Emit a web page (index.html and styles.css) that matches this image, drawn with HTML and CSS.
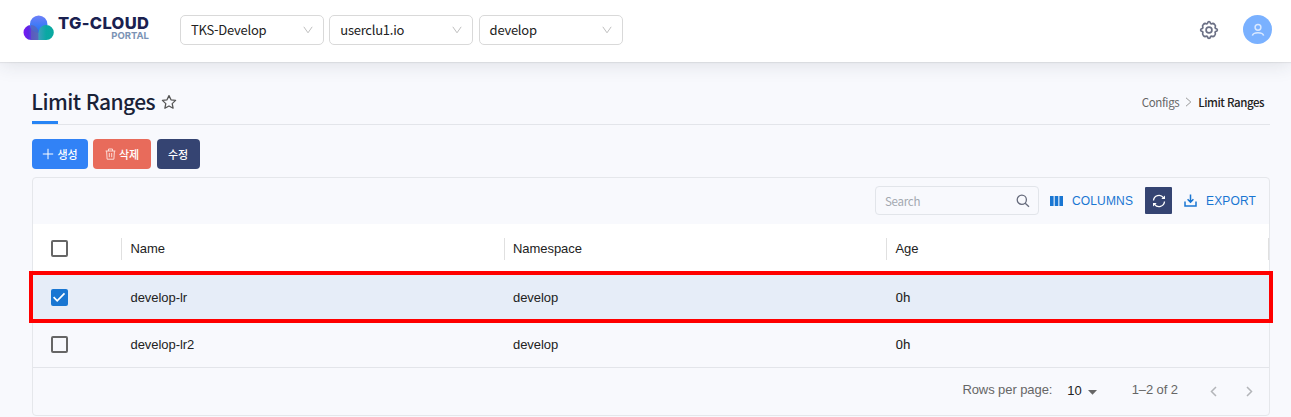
FILE: index.html
```html
<!DOCTYPE html>
<html lang="ko">
<head>
<meta charset="utf-8">
<title>Limit Ranges</title>
<link rel="stylesheet" href="styles.css">
</head>
<body>
<header class="topbar">
  <div class="logo">
    <svg class="logo-mark" width="31" height="26" viewBox="0 0 31 26">
      <defs>
        <linearGradient id="gp" x1="0" x2="1"><stop offset="0" stop-color="#7a18f5"/><stop offset=".3" stop-color="#5f24e6"/><stop offset="1" stop-color="#4d86c8"/></linearGradient>
        <linearGradient id="gb" x1="0" x2="0" y1="0" y2="1"><stop offset="0" stop-color="#6f80f8"/><stop offset="1" stop-color="#1a75f5"/></linearGradient>
        <linearGradient id="gt" x1="0" x2="1"><stop offset="0" stop-color="#3d9fbd"/><stop offset=".5" stop-color="#0aa8a4"/><stop offset="1" stop-color="#0ba9a0"/></linearGradient>
      </defs>
      <path d="M8 10h8v15H8A7.5 7.5 0 0 1 8 10z" fill="url(#gp)"/>
      <circle cx="15.7" cy="9.2" r="8.7" fill="url(#gb)"/>
      <path d="M8 10a7.5 7.5 0 0 1 7.5 7.5V25H8z" fill="#5d62b4" opacity=".7"/>
      <path d="M23.3 10a7.5 7.5 0 0 1 0 15h-7.8v-7.5a7.6 7.6 0 0 1 7.8-7.5z" fill="url(#gt)"/>
    </svg>
    <div class="logo-text"><span class="brand">TG-CLOUD</span><span class="sub">PORTAL</span></div>
  </div>
  <div class="selects">
    <div class="select"><span>TKS-Develop</span><svg width="10" height="8" viewBox="0 0 10 8"><path d="M.8.8 5 6.8 9.2.8"/></svg></div>
    <div class="select"><span>userclu1.io</span><svg width="10" height="8" viewBox="0 0 10 8"><path d="M.8.8 5 6.8 9.2.8"/></svg></div>
    <div class="select"><span>develop</span><svg width="10" height="8" viewBox="0 0 10 8"><path d="M.8.8 5 6.8 9.2.8"/></svg></div>
  </div>
  <svg class="gear" width="20" height="20" viewBox="0 0 20 20"><path d="M10 1.500Q11.200 1.700 11.600 3.500Q12 3.800 12.600 3.900Q14.200 2.900 15.600 4.400Q17.100 5.800 16.100 7.400Q16.200 8 16.500 8.400Q18.400 8.800 18.400 10T16.500 11.600Q16.200 12 16.100 12.600Q17.100 14.200 15.600 15.600Q14.200 17.100 12.600 16.100Q12 16.200 11.600 16.500Q11.200 18.400 10 18.400T8.400 16.500Q8 16.200 7.400 16.100Q5.800 17.100 4.400 15.600Q2.900 14.200 3.900 12.600Q3.800 12 3.500 11.600Q1.600 11.200 1.600 10T3.500 8.400Q3.800 8 3.900 7.400Q2.900 5.800 4.400 4.400Q5.800 2.900 7.400 3.900Q8 3.800 8.400 3.500Q8.800 1.700 10 1.500z"/><circle cx="10" cy="10" r="2.900"/></svg>
  <div class="avatar"><svg width="14" height="14" viewBox="0 0 14 14"><circle cx="7" cy="4.300" r="2.900"/><path d="M1.400 12.600C2.200 8.700 11.800 8.700 12.600 12.600"/></svg></div>
</header>
<main class="page">
  <div class="heading">
    <h1>Limit Ranges</h1>
    <svg class="star" width="16" height="16" viewBox="0 0 16 16"><path d="m8 1.600 2 4.200 4.600.6-3.400 3.200.9 4.600L8 12l-4.100 2.200.9-4.600L1.400 6.400 6 5.800z"/></svg>
    <nav class="crumbs"><span>Configs</span><svg width="7" height="10" viewBox="0 0 7 10"><path d="m1 .8 4.800 4.200L1 9.200"/></svg><b>Limit Ranges</b></nav>
  </div>
  <div class="actions">
    <button class="btn create"><svg width="12" height="12" viewBox="0 0 12 12"><path d="M6 .8v10.400M.8 6h10.400"/></svg>생성</button>
    <button class="btn delete"><svg width="11" height="12" viewBox="0 0 11 12"><path d="M.6 3h9.800M3.500 3V1h4v2M1.600 3l.5 8.200h6.800L9.400 3M4.300 5v4.200M6.700 5v4.200"/></svg>삭제</button>
    <button class="btn edit">수정</button>
  </div>
  <section class="grid">
    <div class="toolbar">
      <div class="search"><span>Search</span><svg width="14" height="14" viewBox="0 0 14 14"><circle cx="5.800" cy="5.800" r="4.600"/><path d="m9.200 9.200 3.800 3.600"/></svg></div>
      <div class="tool columns"><svg width="13" height="10" viewBox="0 0 13 10"><path d="M0 0h3.600v10H0zM4.700 0h3.600v10H4.700zM9.400 0H13v10H9.400z" fill="#1976d2"/></svg><span>COLUMNS</span></div>
      <div class="refresh"><svg width="14" height="14" viewBox="0 0 14 14"><path d="M1.500 6.500A5.500 5.500 0 0 1 11.400 3.700M12.500 7.500A5.500 5.500 0 0 1 2.600 10.300" fill="none" stroke="#fff" stroke-width="1.300"/><path d="M13 1.400v3.700H9.300zM1 12.600V8.900h3.700z" fill="#fff"/></svg></div>
      <div class="tool export"><svg width="13" height="13" viewBox="0 0 13 13"><path d="M1 7.500V12h11V7.500M6.500.5v7.700M3.600 5.300l2.900 2.900 2.900-2.900" fill="none" stroke="#1976d2" stroke-width="1.500"/></svg><span>EXPORT</span></div>
    </div>
    <div class="row head">
      <div class="cell"><i class="box"></i></div>
      <div class="cell">Name</div>
      <div class="cell">Namespace</div>
      <div class="cell">Age</div>
    </div>
    <div class="row selected">
      <div class="cell"><i class="box checked"><svg width="16" height="16" viewBox="0 0 16 16"><path d="m2.600 8.200 3.600 3.600 7.300-7.400"/></svg></i></div>
      <div class="cell">develop-lr</div>
      <div class="cell">develop</div>
      <div class="cell age">0h</div>
    </div>
    <div class="row last">
      <div class="cell"><i class="box"></i></div>
      <div class="cell">develop-lr2</div>
      <div class="cell">develop</div>
      <div class="cell age">0h</div>
    </div>
    <div class="footer">
      <span class="rpp">Rows per page:</span>
      <span class="size">10</span>
      <svg class="caret" width="9" height="5" viewBox="0 0 9 5"><path d="M0 0h9L4.500 4.700z"/></svg>
      <span class="range">1–2 of 2</span>
      <svg class="arrow" width="7" height="11" viewBox="0 0 7 11"><path d="M6 1 1.500 5.500 6 10"/></svg>
      <svg class="arrow" width="7" height="11" viewBox="0 0 7 11"><path d="m1 1 4.500 4.500L1 10"/></svg>
    </div>
  </section>
</main>
</body>
</html>
```
FILE: styles.css
```css
* { box-sizing: border-box; }
body {
  margin: 0;
  height: 417px;
  overflow: hidden;
  background: #f8f9fd;
  font-family: "Noto Sans CJK KR", sans-serif;
  color: #222;
}
svg { display: block; flex: none; }
.topbar {
  height: 62px;
  display: flex;
  align-items: center;
  padding: 0 19px 3px 23px;
  background: #fff;
  box-shadow: 0 1px 1px rgba(0,0,0,.06), 0 2px 20px rgba(40,50,60,.13);
  position: relative;
}
.logo { width: 157px; height: 28px; display: flex; gap: 4px; }
.logo-mark { margin-top: -1px; }
.logo-text { width: 91px; display: flex; flex-direction: column; align-items: flex-end; font-family: Inter, sans-serif; white-space: nowrap; }
.brand { font-size: 16.500px; line-height: 14px; font-weight: 800; color: #1a2150; letter-spacing: .35px; margin-right: -.35px; }
.sub { font-size: 9.500px; line-height: 11px; font-weight: 700; color: #7b93b5; }
.selects { display: flex; gap: 5.300px; }
.select {
  width: 144px;
  height: 30px;
  padding: 0 10px;
  display: flex;
  align-items: center;
  justify-content: space-between;
  border: 1px solid #d9d9d9;
  border-radius: 5px;
  font-size: 13px;
  letter-spacing: -.25px;
  color: #222;
}
.select span { margin-top: -1px; }
.select path { fill: none; stroke: #bfbfbf; stroke-width: 1; }
.gear { margin-left: auto; fill: none; stroke: #6b7085; stroke-width: 1.700; stroke-linejoin: round; }
.avatar {
  width: 29px;
  height: 29px;
  margin-left: 24px;
  border-radius: 50%;
  background: #7ab1ff;
  display: grid;
  place-items: center;
}
.avatar svg { fill: none; stroke: #d9e8ff; stroke-width: 1.500; }
.page { padding: 22px 21px 0 32px; }
.heading {
  height: 41px;
  display: flex;
  align-items: center;
  padding-bottom: 4px;
  border-bottom: 1px solid #e3e5ea;
  background: linear-gradient(#2684f5, #2684f5) left bottom / 26px 3px no-repeat;
}
h1 { margin: -2px 0 0 -.7px; font-size: 21px; font-weight: 500; line-height: 36px; letter-spacing: -.55px; color: #1a2238; white-space: nowrap; }
.star { margin-left: 6px; fill: none; stroke: #555; stroke-width: 1.300; stroke-linejoin: round; }
.crumbs { margin-left: auto; padding-right: 6px; display: flex; align-items: center; gap: 6px; font-size: 11.500px; letter-spacing: -.3px; color: #666; }
.crumbs span { letter-spacing: -.35px; }
.crumbs path { fill: none; stroke: #999; }
.crumbs b { font-weight: 500; letter-spacing: -.48px; color: #222; }
.actions { display: flex; gap: 5px; margin: 14px 0 0; height: 30px; }
.btn {
  border: 0;
  padding: 0;
  border-radius: 4px;
  display: flex;
  align-items: center;
  justify-content: center;
  gap: 3px;
  color: #fff;
  font: 500 11px "Noto Sans CJK KR", sans-serif;
}
.btn path { fill: none; stroke: #fff; stroke-width: 1; }
.create { width: 56px; background: #3182f6; }
.delete { width: 58px; background: #e86b5b; }
.delete path { stroke: #fbdcd8; }
.edit { width: 43px; margin-left: .5px; background: #354472; }
.grid {
  height: 239px;
  margin-top: 8px;
  border: 1px solid #e5e7eb;
  border-radius: 4px;
  font-family: "Liberation Sans", Arial, sans-serif;
  font-size: 13px;
}
.toolbar { height: 46px; display: flex; align-items: center; justify-content: flex-end; padding: 0 14px 1px 0; }
.search {
  width: 164px;
  height: 29px;
  padding: 0 8px 0 9px;
  display: flex;
  align-items: center;
  justify-content: space-between;
  border: 1px solid #e2e5ea;
  border-radius: 4px;
  font: 11.500px "Noto Sans CJK KR", sans-serif;
  letter-spacing: -.25px;
  color: #a3a8b0;
}
.search svg { fill: none; stroke: #666b7c; stroke-width: 1.300; }
.tool { display: flex; align-items: center; gap: 9px; color: #1976d2; font-size: 12px; letter-spacing: .15px; }
.columns { margin-left: 11px; }
.columns span { width: 61px; }
.export span { width: 49px; }
.refresh { width: 27px; height: 27px; margin: 0 12px; border-radius: 1px; background: #354472; display: grid; place-items: center; }
.row { display: grid; grid-template-columns: 89px 382.500px 382.500px 1fr; align-items: center; letter-spacing: -.05px; }
.row .cell { padding-left: 8.500px; }
.row .cell:first-child { padding-left: 18px; }
.head { height: 47px; background: #fff; padding-top: 3px; }
.head .cell { height: 22px; line-height: 21px; border-right: 1px solid #e0e0e0; }
.head .box { margin-top: 2px; }
.selected {
  height: 52px;
  margin: 0 -4px;
  border: 4px solid #f00;
  background: #e6edf8;
  position: relative;
}
.last { height: 45px; padding-bottom: 2px; border-bottom: 1px solid #e3e5ea; }
.box { display: block; width: 17px; height: 17px; border: 2px solid #666; border-radius: 2px; }
.checked { border: 0; background: #1976d2; }
.checked path { fill: none; stroke: #fff; stroke-width: 1.700; }
.age { font-family: Roboto, sans-serif; font-size: 13.500px; }
.footer { height: 47px; display: flex; align-items: center; color: #666; padding: 0 16px 5px 0; justify-content: flex-end; letter-spacing: -.08px; }
.size { color: #222; margin-left: 15px; padding-top: 2px; }
.caret { margin: 6px 0 0 6px; fill: #666; }
.range { margin-left: 35px; margin-right: 32px; }
.arrow { fill: none; stroke: #b3b5b9; stroke-width: 1.500; margin-top: 5px; }
.arrow + .arrow { margin-left: 29px; }
```
